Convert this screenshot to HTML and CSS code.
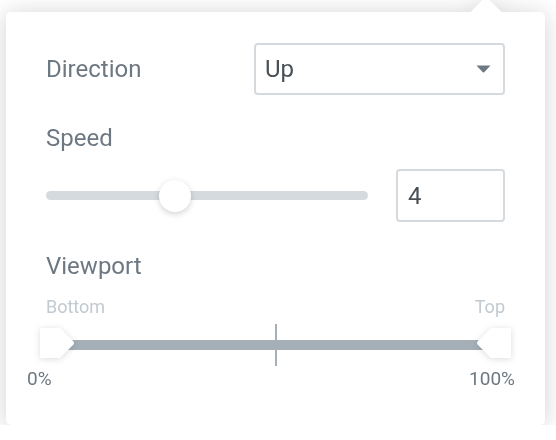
FILE: index.html
```html
<!DOCTYPE html>
<html>
<head>
<meta charset="utf-8">
<link rel="stylesheet" href="styles.css">
</head>
<body>
<div class="popover">
  <div class="row row-direction">
    <span class="label">Direction</span>
    <div class="select">
      <span class="value">Up</span>
      <svg class="caret" width="15" height="8" viewBox="0 0 15 8"><path d="M0.5 0.5 H14.5 L8.2 7.2 Q7.5 7.9 6.8 7.2 Z" fill="#6d7882"/></svg>
    </div>
  </div>

  <div class="label label-block speed-label">Speed</div>
  <div class="row row-speed">
    <div class="slider">
      <div class="slider-track"></div>
      <div class="slider-thumb" style="left: 40%"></div>
    </div>
    <div class="number"><span class="value">4</span></div>
  </div>

  <div class="label label-block viewport-label">Viewport</div>
  <div class="range-ends">
    <span>Bottom</span>
    <span>Top</span>
  </div>
  <div class="range">
    <div class="range-track"></div>
    <div class="range-tick"></div>
    <svg class="handle handle-left" width="36" height="30" viewBox="0 0 36 30"><path d="M0 0 H20 L33 13 Q35 15 33 17 L20 30 H0 Z" fill="#fff"/></svg>
    <svg class="handle handle-right" width="36" height="30" viewBox="0 0 36 30"><path d="M36 0 H16 L3 13 Q1 15 3 17 L16 30 H36 Z" fill="#fff"/></svg>
  </div>
  <div class="range-values">
    <span>0%</span>
    <span>100%</span>
  </div>
</div>
</body>
</html>
```

FILE: styles.css
```css
html, body {
  margin: 0;
  padding: 0;
  background: #ffffff;
}

body {
  font-family: Roboto, "Liberation Sans", sans-serif;
  overflow: hidden;
}

.popover {
  position: relative;
  box-sizing: border-box;
  margin: 12px 0 0 6px;
  width: 539px;
  height: 413px;
  padding: 31px 40px 0 40px;
  background: #ffffff;
  border-radius: 5px;
  filter: drop-shadow(0 2px 12px rgba(0, 0, 0, 0.18));
}

.popover::before {
  content: "";
  position: absolute;
  top: -11px;
  left: 469px;
  width: 22px;
  height: 22px;
  background: #ffffff;
  transform: rotate(45deg);
}

.row {
  display: flex;
  align-items: center;
  justify-content: space-between;
}

.label {
  font-size: 24px;
  line-height: 27px;
  color: #6d7882;
}

.label-block {
  display: block;
}

.select {
  box-sizing: border-box;
  width: 251px;
  height: 52px;
  border: 2px solid #d5dadf;
  border-radius: 4px;
  display: flex;
  align-items: center;
  justify-content: space-between;
  padding: 0 12px 0 9px;
}

.value {
  font-size: 24px;
  color: #495157;
}

.caret {
  display: block;
  margin-top: -1px;
}

.speed-label {
  margin-top: 30px;
}

.row-speed {
  margin-top: 17px;
}

.slider {
  position: relative;
  width: 322px;
  height: 34px;
  display: flex;
  align-items: center;
}

.slider-track {
  width: 100%;
  height: 9px;
  border-radius: 5px;
  background: #d5dadf;
}

.slider-thumb {
  position: absolute;
  top: 1px;
  width: 32px;
  height: 32px;
  margin-left: -16px;
  border-radius: 50%;
  background: #ffffff;
  box-shadow: 0 2px 6px rgba(0, 0, 0, 0.18);
}

.number {
  box-sizing: border-box;
  width: 109px;
  height: 53px;
  border: 2px solid #d5dadf;
  border-radius: 4px;
  display: flex;
  align-items: center;
  padding-left: 10px;
}

.viewport-label {
  margin-top: 31px;
}

.range-ends {
  display: flex;
  justify-content: space-between;
  margin-top: 16px;
  font-size: 18px;
  line-height: 21px;
  color: #c2cad1;
}

.range {
  position: relative;
  margin-top: 7px;
  height: 42px;
  display: flex;
  align-items: center;
}

.range-track {
  width: 100%;
  height: 10px;
  background: #a4afb7;
}

.range-tick {
  position: absolute;
  left: 50%;
  top: 0;
  width: 2px;
  height: 42px;
  margin-left: -1px;
  background: #a4afb7;
}

.handle {
  position: absolute;
  top: 4px;
  filter: drop-shadow(0 1px 3px rgba(0, 0, 0, 0.14));
}

.handle-left {
  left: -6px;
}

.handle-right {
  right: -6px;
}

.range-values {
  display: flex;
  justify-content: space-between;
  margin: 2px -10px 0 -19px;
  font-size: 19px;
  line-height: 22px;
  color: #6d7882;
}
```
